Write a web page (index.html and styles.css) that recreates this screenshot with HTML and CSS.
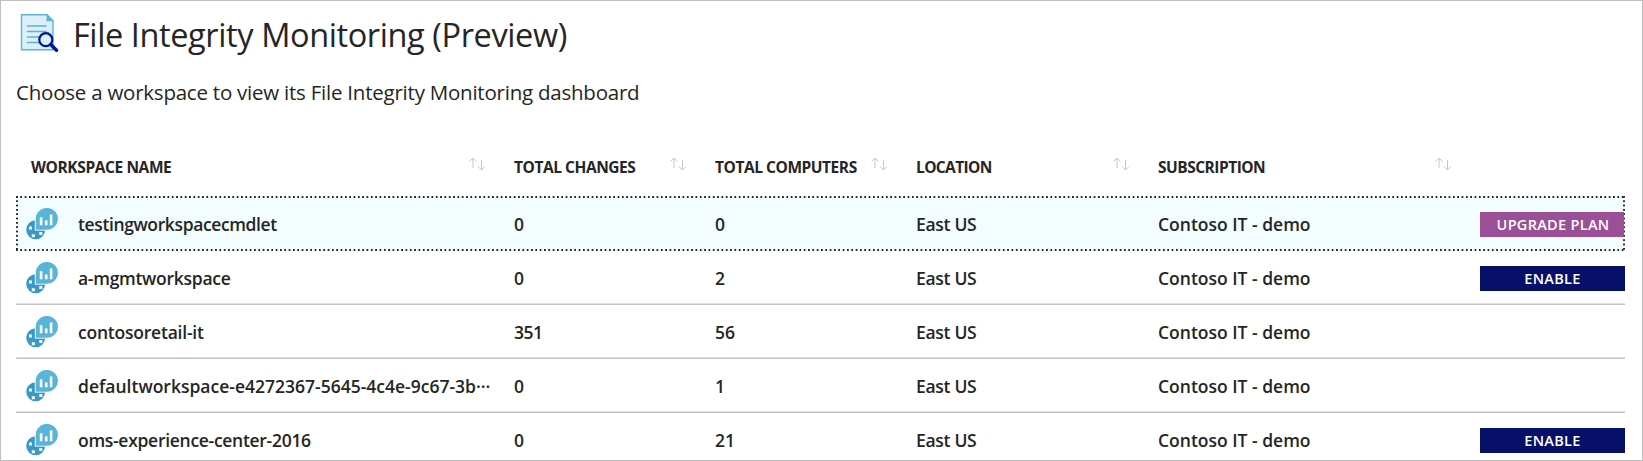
FILE: index.html
```html
<!DOCTYPE html>
<html lang="en">
<head>
<meta charset="utf-8">
<title>File Integrity Monitoring (Preview)</title>
<link rel="stylesheet" href="styles.css">
</head>
<body>
<svg class="defs" width="0" height="0" aria-hidden="true">
  <symbol id="workspace" viewBox="0 0 32 32">
    <circle cx="9.700" cy="21.700" r="9.500" fill="#3999c6"/>
    <path d="M3 18.500h3v3H3zM13.300 24h3v3h-3zM5.800 26.300h3v3h-3z" fill="#fff"/>
    <path d="M8.800 22.600V11H21v11.600z" fill="#fff"/>
    <path d="M9.700 21.700V10.900A11.100 10.900 0 1 1 20.800 21.700z" fill="#59b4d9"/>
    <path d="M13.800 9.200h2.600v8h-2.600zM18.900 12.500h2.600v4.700h-2.600zM23.800 6.600h2.600v10.600h-2.600z" fill="#fff"/>
  </symbol>
  <symbol id="sort" viewBox="0 0 16 14">
    <path d="M4 11V1M.5 4.500L4 1l3.500 3.500M12.500 3v10M9 9.500l3.500 3.500L16 9.500" fill="none" stroke="#c6c6c6"/>
  </symbol>
</svg>
<main class="blade">
  <header class="title-bar">
    <svg class="title-icon" width="40" height="40" viewBox="0 0 40 40">
      <path d="M1.500 1.700h25.500l6 6v29.100H1.500z" fill="#dceff7" stroke="#59b4d9" stroke-width="1.400"/>
      <path d="M26.500 1v7.200h7.300z" fill="#59b4d9"/>
      <path d="M7.500 13h18.500M7.500 18.500h18.500M7.500 24h12M7.500 29.500h12" stroke="#59b4d9" stroke-width="1.500" stroke-linecap="round"/>
      <circle cx="25.800" cy="26.700" r="6.500" fill="#dceff7" stroke="#00188f" stroke-width="2.200"/>
      <path d="M30.800 31.500l5.700 5.700" stroke="#00188f" stroke-width="3.500" stroke-linecap="round"/>
    </svg>
    <h1 class="title">File Integrity Monitoring (Preview)</h1>
  </header>
  <p class="subtitle">Choose a workspace to view its File Integrity Monitoring dashboard</p>
  <div class="grid">
    <div class="row head">
      <div class="cell"><span class="t1">WORKSPACE NAME</span><svg class="sort"><use href="#sort"/></svg></div>
      <div class="cell"><span class="t2">TOTAL CHANGES</span><svg class="sort"><use href="#sort"/></svg></div>
      <div class="cell"><span class="t3">TOTAL COMPUTERS</span><svg class="sort"><use href="#sort"/></svg></div>
      <div class="cell"><span class="t4">LOCATION</span><svg class="sort"><use href="#sort"/></svg></div>
      <div class="cell"><span class="t5">SUBSCRIPTION</span><svg class="sort"><use href="#sort"/></svg></div>
      <div></div>
    </div>
    <div class="row item selected">
      <div class="name"><svg class="ws"><use href="#workspace"/></svg><span class="n1">testingworkspacecmdlet</span></div>
      <div>0</div><div>0</div><div class="loc">East US</div><div class="sub">Contoso IT - demo</div>
      <div class="button upgrade">UPGRADE PLAN</div>
    </div>
    <div class="row item">
      <div class="name"><svg class="ws"><use href="#workspace"/></svg><span class="n2">a-mgmtworkspace</span></div>
      <div>0</div><div>2</div><div class="loc">East US</div><div class="sub">Contoso IT - demo</div>
      <div class="button enable">ENABLE</div>
    </div>
    <div class="row item">
      <div class="name"><svg class="ws"><use href="#workspace"/></svg><span class="n3">contosoretail-it</span></div>
      <div class="num">351</div><div>56</div><div class="loc">East US</div><div class="sub">Contoso IT - demo</div>
      <div></div>
    </div>
    <div class="row item">
      <div class="name"><svg class="ws"><use href="#workspace"/></svg><span class="n4">defaultworkspace-e4272367-5645-4c4e-9c67-3b···</span></div>
      <div>0</div><div>1</div><div class="loc">East US</div><div class="sub">Contoso IT - demo</div>
      <div></div>
    </div>
    <div class="row item">
      <div class="name"><svg class="ws"><use href="#workspace"/></svg><span class="n5">oms-experience-center-2016</span></div>
      <div>0</div><div>21</div><div class="loc">East US</div><div class="sub">Contoso IT - demo</div>
      <div class="button enable">ENABLE</div>
    </div>
  </div>
</main>
</body>
</html>
```

FILE: styles.css
```css
* { box-sizing: border-box; }
body {
  margin: 0;
  background: #fff;
  color: #252525;
  font-family: "Open Sans", "Noto Sans", sans-serif;
}
.defs { display: block; }
.blade {
  height: 461px;
  border: 1px solid #bfbfbf;
  overflow: hidden;
  padding: 12px 17px 0 15px;
}
.title-bar { display: flex; height: 46px; padding-left: 4px; gap: 13px; }
.title-icon { flex: none; }
.title { margin: 0; font-size: 32.500px; line-height: 44px; font-weight: 400; white-space: nowrap; letter-spacing: -0.4px; }
.subtitle { margin: 17px 0 0; height: 32px; font-size: 20.500px; line-height: 32px; white-space: nowrap; letter-spacing: -0.23px; }
.grid { margin-top: 35px; }
.row { display: grid; grid-template-columns: 498px 201px 201px 242px 322px 145px; }
.row > div { white-space: nowrap; }
.head { height: 53px; font-size: 15.500px; font-weight: 700; line-height: 48px; }
.cell { display: flex; justify-content: space-between; padding-right: 29px; }
.cell:first-child { padding-left: 15px; }
.t1 { letter-spacing: -0.4px; }
.t2, .t3 { letter-spacing: -0.45px; }
.t4 { letter-spacing: -0.62px; }
.t5 { letter-spacing: -0.5px; }
.sort { width: 16px; height: 14px; margin-top: 14px; flex: none; overflow: visible; }
.item {
  height: 54px;
  align-items: center;
  font-size: 17.500px;
  font-weight: 600;
  line-height: 52px;
  border-bottom: 1px solid #c4c4c4;
  box-shadow: inset 0 -1px #e0e0e0;
}
/* Focus ring: fine dots along each edge, lighter than a 2px dotted border */
.selected {
  height: 55px;
  border: 0;
  box-shadow: none;
  padding-right: 1px;
  grid-template-columns: 498px 201px 201px 242px 322px 144px;
  background:
    linear-gradient(90deg, #252525 1.700px, transparent 1.700px) 0 0 / 4.330px 1.600px repeat-x,
    linear-gradient(90deg, #252525 1.700px, transparent 1.700px) 0 100% / 4.330px 1.600px repeat-x,
    linear-gradient(#252525 1.700px, transparent 1.700px) 0 0 / 1.600px 4.330px repeat-y,
    linear-gradient(#252525 1.700px, transparent 1.700px) 100% 0 / 1.600px 4.330px repeat-y,
    #f3fcff;
}
.name { display: flex; align-items: center; gap: 20px; padding-left: 10px; }
.n1 { letter-spacing: -0.38px; }
.n2 { letter-spacing: -0.28px; }
.n3 { letter-spacing: -0.22px; }
.n5 { letter-spacing: -0.29px; }
.loc { letter-spacing: -0.3px; }
.num { letter-spacing: -0.5px; }
.ws { width: 32px; height: 32px; flex: none; }
.button { height: 25px; line-height: 25px; color: #fff; text-align: center; font-size: 14.500px; font-weight: 600; letter-spacing: 0.3px; }
.upgrade { margin-top: 2px; background: #9b4f96; padding-left: 2px; }
.enable { margin-top: 1px; background: #061069; }
```
